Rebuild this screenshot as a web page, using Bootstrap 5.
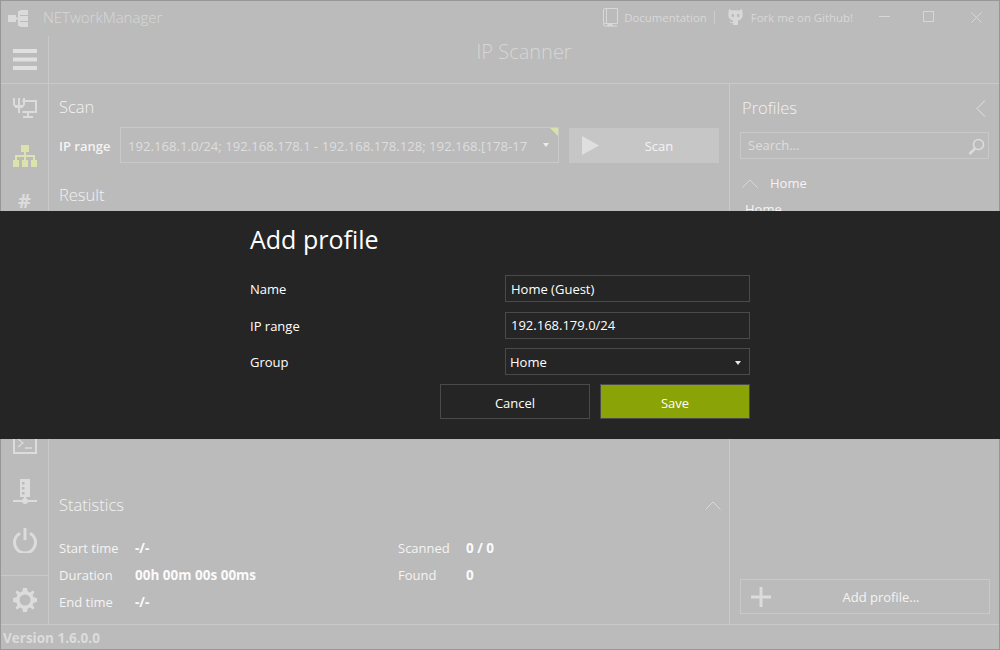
<!DOCTYPE html>
<html lang="en">
<head>
<meta charset="utf-8">
<title>NETworkManager</title>
<link href="https://cdn.jsdelivr.net/npm/bootstrap@5.3.0/dist/css/bootstrap.min.css" rel="stylesheet">
<style>
html,body{margin:0;height:100%;overflow:hidden;background:#bbb}
body{font-family:"Open Sans","Noto Sans",sans-serif;font-size:13px;color:#f4f4f4}
.nm-win{width:1000px;height:650px;background:#bbb;border:1px solid #979797;position:relative;display:flex;flex-direction:column}
.nm-title{height:35px;flex:none;padding:0 0 0 7px;color:#d6d6d6}
.nm-brand{font-size:15px;font-weight:300;color:#d8d8d8;margin-left:15px;padding-bottom:2px}
.nm-link{font-size:11.4px;color:#d8d8d8;padding-bottom:2px}
.nm-book{margin-right:6px}
.nm-pipe{width:1px;height:13px;background:#cdcdcd;margin:0 13px 0 7px}
.nm-winbtns{width:139px;margin-left:7px;padding:0 17px 0 19px}
.nm-winmid{margin-right:4px}
.nm-head{height:47px;flex:none;display:flex}
.nm-burger{width:48px;flex:none;border-right:1px solid #c9c9c9;display:flex;align-items:center;justify-content:center}
.nm-pagetitle{font-size:20px;font-weight:300;color:#d6d6d6;line-height:30px;padding-bottom:16px}
.nm-body{flex:1;min-height:0;display:flex;border-top:1px solid #c9c9c9;border-bottom:1px solid #c9c9c9}
.nm-rail{width:48px;flex:none;border-right:1px solid #c9c9c9;display:flex;flex-direction:column}
.nm-railtop{flex:1;display:flex;flex-direction:column;align-items:center;padding-top:14px}
.nm-railtop svg{flex:none}
.nm-hash{font-size:20px;font-weight:700;color:#dcdcdc;line-height:22px;height:22px}
.nm-stem{width:2px;height:5px;background:#dcdcdc}
.nm-railbtm{height:49px;border-top:1px solid #c9c9c9;flex:none;display:flex;align-items:center;justify-content:center}
.nm-main{flex:1;min-width:0;padding:0 10px;display:flex;flex-direction:column}
.nm-side{width:270px;flex:none;border-left:1px solid #c9c9c9;padding:0 10px 10px 10px;display:flex;flex-direction:column}
.nm-h{font-size:16.5px;font-weight:300;color:#f2f2f2;line-height:24px}
.nm-lab{font-size:13px;color:#f4f4f4;width:51px;flex:none;white-space:nowrap;padding-top:3px}
.nm-range{width:439px;height:36px;border:1px solid #c9c9c9;position:relative;padding:1px 0 0 7px;color:#dedede;white-space:nowrap;line-height:34px;font-size:13.15px;margin-left:10px}
.nm-corner{position:absolute;right:0;top:0;width:0;height:0;border-top:8px solid #d9e1a5;border-left:8px solid transparent}
.nm-caret{position:absolute;right:9px;top:15px;display:block;border-top:4px solid #ececec;border-left:3px solid transparent;border-right:3px solid transparent}
.nm-scan{width:150px;height:35px;margin-left:10px;background:#c6c6c6;border-radius:0;border:0;position:relative;color:#f4f4f4;font-size:13px;padding:3px 0 0 30px;display:flex;align-items:center;justify-content:center}
.nm-scan svg{position:absolute;left:13px;top:8px}
.nm-stat{font-size:13px;line-height:27px}
.nm-stat b{font-weight:700;color:#fafafa;font-size:13.5px}
.nm-k{display:inline-block;width:76px}
.nm-k2{display:inline-block;width:68px}
.nm-statcol1{width:339px}
.nm-search{height:27px;border:1px solid #c9c9c9;padding:1px 3px 0 7px;color:#dedede}
.nm-group{font-size:13px;margin-top:15px;color:#f4f4f4}
.nm-add{height:35px;border:1px solid #c9c9c9;background:transparent;border-radius:0;position:relative;color:#f4f4f4;font-size:13px;padding:2px 0 0;margin-top:auto;width:250px}
.nm-add svg{position:absolute;left:10px;top:7px}
.nm-foot{height:24px;flex:none;font-size:13.5px;font-weight:700;color:#dcdcdc;padding-left:2px;line-height:27px}
.nm-dialog{position:absolute;left:-1px;right:-1px;top:210px;height:228px;background:#252525;color:#fff;z-index:5;padding:0 250px}
.nm-dlgtitle{font-size:25px;font-weight:400;line-height:32px;margin:12px 0 20px}
.nm-row{display:flex;align-items:center;height:27px;margin-bottom:9.5px;font-size:13px}
.nm-row>span{width:255px;flex:none;padding-top:3px}
.nm-input{flex:1;height:100%;border:1px solid #4a4a4a;padding:2px 5px 0;display:flex;align-items:center;justify-content:space-between;color:#fff}
.nm-input em{font-style:normal;margin-left:-1px}
.nm-input i{display:block;border-top:4px solid #e8e8e8;border-left:3px solid transparent;border-right:3px solid transparent;margin-right:3px}
.nm-btns{display:flex;justify-content:flex-end;gap:10px;margin-top:-.5px}
.nm-btn{width:150px;height:35px;border-radius:0;font-size:13px;color:#fff;background:transparent;border:1px solid #4a4a4a;padding:4px 0 0}
.nm-btn-save{background:#8aa307}
.nm-btn:hover{color:#fff}
</style>
</head>
<body>
<div class="nm-win">
  <div class="nm-title d-flex align-items-center">
    <svg width="20" height="17" viewBox="0 0 20 17" fill="#dadada"><rect x="0" y="5" width="8" height="7"/><rect x="10" y="1" width="2" height="15"/><path d="M7 7.500h13v2H7z"/><rect x="12" y="0" width="8" height="5"/><rect x="12" y="6" width="8" height="5"/><rect x="12" y="12" width="8" height="5"/></svg>
    <span class="nm-brand">NETworkManager</span>
    <span class="ms-auto d-flex align-items-center nm-link">
      <svg width="15" height="19" viewBox="0 0 15 19" fill="none" stroke="#d8d8d8" class="nm-book"><path d="M.5 16V2A1.500 1.500 0 0 1 2 .5h12.500v15H2A1.500 1.500 0 0 0 .5 17 1.500 1.500 0 0 0 2 18h12.500M3.500 1v14"/><path d="M5 15v3.500l2-1.500 2 1.500V15" fill="#d8d8d8"/></svg>
      Documentation<span class="nm-pipe"></span>
      <svg width="15" height="17" viewBox="0 0 15 17" fill="#d8d8d8" class="me-2"><path d="M1 0l3 1.500Q7.500 1 11 1.500L14 0l.5 4q.5 3-.5 5-1.500 2-4 2.500V16H5v-4.500Q2.500 11 1 9 0 7 .5 4z"/><path d="M5 13.500Q2.500 14.500 1.500 12.500" fill="none" stroke="#d8d8d8"/><ellipse cx="4.800" cy="6.500" rx="1.300" ry="1.800" fill="#bbb"/><ellipse cx="10.200" cy="6.500" rx="1.300" ry="1.800" fill="#bbb"/></svg>
      Fork me on Github!
    </span>
    <span class="nm-winbtns d-flex align-items-center justify-content-between">
      <svg width="11" height="15" viewBox="0 0 11 15" stroke="#d6d6d6" fill="none"><path d="M0 5.500h11"/></svg>
      <svg width="11" height="15" viewBox="0 0 11 15" stroke="#d6d6d6" fill="none" class="nm-winmid"><rect x=".5" y=".5" width="10" height="10"/></svg>
      <svg width="11" height="15" viewBox="0 0 11 15" stroke="#d6d6d6" fill="none"><path d="M.5 1.500l10 10m0-10l-10 10"/></svg>
    </span>
  </div>
  <div class="nm-head">
    <div class="nm-burger">
      <svg width="24" height="21" viewBox="0 0 24 21" fill="#e0e0e0"><rect width="24" height="4"/><rect y="8.500" width="24" height="4"/><rect y="17" width="24" height="4"/></svg>
    </div>
    <div class="flex-grow-1 d-flex align-items-center justify-content-center nm-pagetitle">IP Scanner</div>
  </div>
  <div class="nm-body">
    <div class="nm-rail">
      <div class="nm-railtop">
        <svg width="24" height="20" viewBox="0 0 24 20" fill="none" stroke="#dcdcdc" stroke-width="2" style="margin-bottom:27px"><path d="M1 0v6.500L3 9h6l2-2.500V0M6 0v15M3 9h6M9.500 3H23v11H9.500M15 14v4M10 19h10" /><path d="M2 7h8v2.500H2z" fill="#dcdcdc" stroke="none"/></svg>
        <svg width="24" height="22" viewBox="0 0 24 22" fill="#dde3ad" style="margin-bottom:23px"><rect x="8" y="0" width="8" height="7"/><rect x="0" y="15" width="6" height="7"/><rect x="9" y="15" width="6" height="7"/><rect x="18" y="15" width="6" height="7"/><path d="M11 7h2v3h9v5h-2v-3h-7v3h-2v-3H4v3H2v-5h9z"/></svg>
        <span class="nm-hash">#</span>
        <span class="nm-stem"></span>
        <span class="flex-grow-1"></span>
        <svg width="24" height="20" viewBox="0 0 24 20" fill="none" stroke="#dcdcdc" stroke-width="2" style="margin-bottom:25px"><rect x="1" y="1" width="22" height="18"/><path d="M5 5l5 4-5 4M12 14h7" stroke-width="1.300"/></svg>
        <svg width="24" height="26" viewBox="0 0 24 26" fill="#dcdcdc" style="margin-bottom:22px"><path d="M7 0h10v18H7z"/><rect x="9" y="3" width="2.500" height="2.500" fill="#bbb"/><rect x="9" y="8" width="2.500" height="2.500" fill="#bbb"/><rect x="9" y="13" width="2.500" height="2.500" fill="#bbb"/><rect x="11" y="18" width="2" height="4"/><rect y="21" width="24" height="2"/><circle cx="12" cy="22" r="3"/></svg>
        <svg width="24" height="26" viewBox="0 0 24 26" fill="none" stroke="#dcdcdc" stroke-width="3" style="margin-bottom:22px"><path d="M7 6.200a10.500 10.500 0 1 0 10 0M12 1v12"/></svg>
      </div>
      <div class="nm-railbtm">
        <svg width="24" height="24" viewBox="0 0 24 24" fill="#dcdcdc"><path fill-rule="evenodd" d="M10 0h4l.7 3.500 2.200.9L20 2.500 21.500 4l-1.900 3.100.9 2.200L24 10v4l-3.500.7-.9 2.200 1.900 3.100-1.500 1.500-3.100-1.900-2.200.9L14 24h-4l-.7-3.500-2.200-.9L4 21.500 2.500 20l1.900-3.100-.9-2.200L0 14v-4l3.500-.7.9-2.200L2.500 4 4 2.500l3.100 1.900 2.200-.9zM12 6.500a5.500 5.500 0 1 0 0 11 5.500 5.500 0 0 0 0-11z"/></svg>
      </div>
    </div>
    <div class="nm-main">
      <div class="nm-h" style="margin-top:11px">Scan</div>
      <div class="d-flex align-items-center" style="margin-top:8px">
        <span class="nm-lab fw-semibold">IP range</span>
        <div class="nm-range">192.168.1.0/24; 192.168.178.1 - 192.168.178.128; 192.168.[178-17<span class="nm-caret"></span><span class="nm-corner"></span></div>
        <button type="button" class="btn nm-scan"><svg width="18" height="19" viewBox="0 0 18 19" fill="#dfdfdf"><path d="M0 0l17 9.500L0 19z"/></svg>Scan</button>
      </div>
      <div class="nm-h" style="margin-top:20px">Result</div>
      <div class="flex-grow-1"></div>
      <div class="d-flex align-items-center justify-content-between">
        <div class="nm-h">Statistics</div>
        <svg width="16" height="9" viewBox="0 0 16 9" fill="none" stroke="#d8d8d8" style="margin-right:-2px"><path d="M.5 8.500L8 1l7.500 7.500"/></svg>
      </div>
      <div class="d-flex nm-stat" style="margin-top:18px;margin-bottom:8px">
        <div class="nm-statcol1">
          <div><span class="nm-k">Start time</span><b>-/-</b></div>
          <div><span class="nm-k">Duration</span><b>00h 00m 00s 00ms</b></div>
          <div><span class="nm-k">End time</span><b>-/-</b></div>
        </div>
        <div>
          <div><span class="nm-k2">Scanned</span><b>0 / 0</b></div>
          <div><span class="nm-k2">Found</span><b>0</b></div>
        </div>
      </div>
    </div>
    <div class="nm-side">
      <div class="d-flex align-items-center justify-content-between" style="margin-top:12px;padding:0 3px 0 2px">
        <div class="nm-h">Profiles</div>
        <svg width="10" height="17" viewBox="0 0 10 17" fill="none" stroke="#e2e2e2"><path d="M9 .5L1 8.500l8 8"/></svg>
      </div>
      <div class="nm-search d-flex align-items-center justify-content-between" style="margin-top:12px">
        <span>Search...</span>
        <svg width="17" height="17" viewBox="0 0 17 17" fill="none" stroke="#dcdcdc" stroke-width="1.600"><circle cx="10.500" cy="6.500" r="5"/><path d="M7 10.500L1.500 16" stroke-width="2.500"/></svg>
      </div>
      <div class="nm-group d-flex align-items-center">
        <svg width="16" height="9" viewBox="0 0 16 9" fill="none" stroke="#d8d8d8" style="margin-left:2px;margin-right:12px"><path d="M.5 8.500L8 1l7.500 7.500"/></svg>
        Home
      </div>
      <div style="margin-top:6px;padding-left:5px">Home</div>
      <button type="button" class="btn nm-add"><svg width="20" height="20" viewBox="0 0 20 20" fill="#dcdcdc"><rect x="8.500" width="3" height="20"/><rect y="8.500" width="20" height="3"/></svg><span style="padding-left:32px">Add profile...</span></button>
    </div>
  </div>
  <div class="nm-foot">Version 1.6.0.0</div>
  <div class="nm-dialog">
    <div class="nm-dlgtitle">Add profile</div>
    <div class="nm-row"><span>Name</span><div class="nm-input">Home (Guest)</div></div>
    <div class="nm-row"><span>IP range</span><div class="nm-input">192.168.179.0/24</div></div>
    <div class="nm-row"><span>Group</span><div class="nm-input"><em>Home</em><i></i></div></div>
    <div class="nm-btns">
      <button type="button" class="btn nm-btn">Cancel</button>
      <button type="button" class="btn nm-btn nm-btn-save">Save</button>
    </div>
  </div>
</div>
<script src="https://cdn.jsdelivr.net/npm/bootstrap@5.3.0/dist/js/bootstrap.bundle.min.js"></script>
</body>
</html>
